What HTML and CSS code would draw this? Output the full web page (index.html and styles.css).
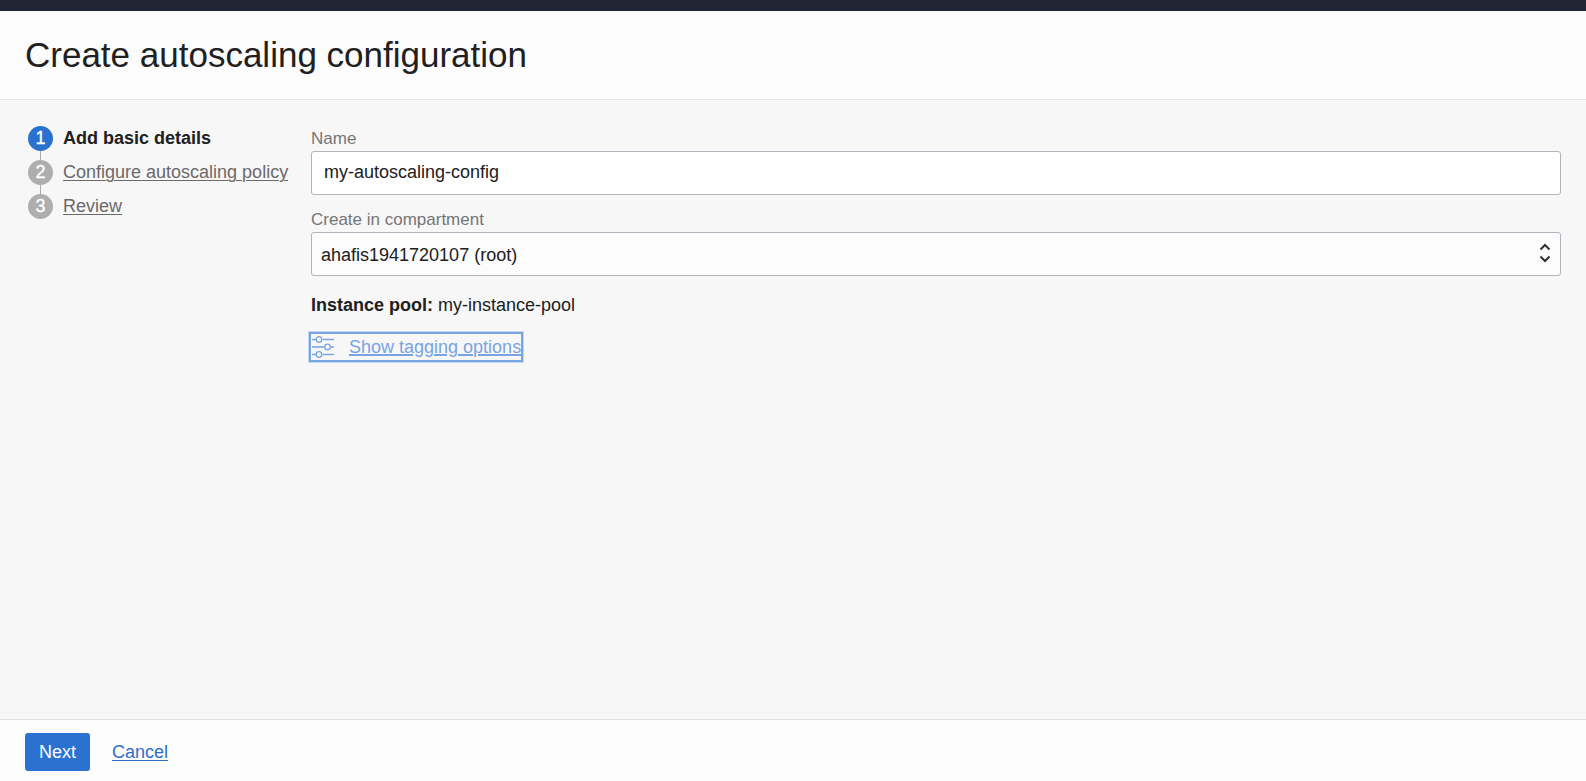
FILE: index.html
```html
<!DOCTYPE html>
<html lang="en">
<head>
<meta charset="utf-8">
<meta name="viewport" content="width=device-width, initial-scale=1">
<title>Create autoscaling configuration</title>
<link rel="stylesheet" href="styles.css">
</head>
<body>
<header class="page-header">
  <h1 class="page-title">Create autoscaling configuration</h1>
</header>
<main class="wizard">
  <nav aria-label="Steps">
    <ol class="steps">
      <li class="step step-current" aria-current="step"><span class="step-number">1</span><span>Add basic details</span></li>
      <li class="step"><span class="step-number">2</span><a class="step-link" href="#policy">Configure autoscaling policy</a></li>
      <li class="step"><span class="step-number">3</span><a class="step-link" href="#review">Review</a></li>
    </ol>
  </nav>
  <form class="details" id="details">
    <div class="field">
      <label class="field-label" for="name">Name</label>
      <input class="control name-input" id="name" type="text" value="my-autoscaling-config">
    </div>
    <div class="field">
      <label class="field-label" for="compartment">Create in compartment</label>
      <div class="select-wrap">
        <select class="control compartment-select" id="compartment">
          <option>ahafis1941720107 (root)</option>
        </select>
        <svg class="select-arrows" width="12" height="20" viewBox="0 0 12 20" aria-hidden="true"><path d="M1.500 6.500 6 2l4.500 4.500M1.500 13.500 6 18l4.500-4.500"/></svg>
      </div>
    </div>
    <p class="pool"><strong>Instance pool:</strong> my-instance-pool</p>
    <a class="tagging" href="#tagging">
      <svg class="tagging-icon" width="22" height="24" viewBox="0 0 22 24" aria-hidden="true"><path d="M0 4.500h4M11 4.500h11M0 12h12M19 12h3M0 19.500h4M11 19.500h11"/><circle cx="7" cy="4.500" r="2.800"/><circle cx="15.500" cy="12" r="2.800"/><circle cx="7" cy="19.500" r="2.800"/></svg>
      <span class="tagging-text">Show tagging options</span>
    </a>
  </form>
</main>
<footer class="actions">
  <button class="next" type="submit" form="details">Next</button>
  <a class="cancel" href="#cancel">Cancel</a>
</footer>
</body>
</html>
```
FILE: styles.css
```css
* {
  box-sizing: border-box;
}

body {
  margin: 0;
  min-height: 100vh;
  display: flex;
  flex-direction: column;
  border-top: 11px solid #212634;
  background: #f7f7f7;
  color: #202020;
  font: 18px/24px "Liberation Sans", Arial, sans-serif;
}

.page-header {
  padding: 24px 25px;
  border-bottom: 1px solid #e3e3e3;
  background: #fcfcfc;
}

.page-title {
  margin: 0;
  font-size: 35px;
  line-height: 40px;
  font-weight: 400;
}

.wizard {
  flex: 1;
  display: grid;
  grid-template-columns: 263px 1fr;
  gap: 20px;
  padding: 26px 25px 24px 28px;
}

.steps {
  display: flex;
  flex-direction: column;
  gap: 9px;
  margin: 0;
  padding: 0;
  list-style: none;
}

.step {
  position: relative;
  display: flex;
  gap: 10px;
  white-space: nowrap;
}

.step-current {
  font-weight: 700;
}

.step:not(:last-child)::after {
  content: "";
  position: absolute;
  top: 25px;
  left: 12px;
  width: 1px;
  height: 9px;
  background: #aaa;
}

.step-number {
  flex: none;
  width: 25px;
  height: 25px;
  border-radius: 50%;
  background: #aeaeae;
  color: #fff;
  font-weight: 400;
  line-height: 25px;
  text-align: center;
  -webkit-text-stroke: 0.3px #fff;
}

.step-current .step-number {
  background: #2b72d0;
}

.step-link {
  color: #6b6969;
}

.step-link,
.cancel,
.tagging-text {
  text-decoration-line: underline;
  text-decoration-thickness: 1px;
  text-underline-offset: 2px;
}

.field {
  margin-bottom: 12px;
}

.field-label {
  display: block;
  color: #757575;
  font-size: 17px;
  line-height: 25px;
}

.control {
  display: block;
  width: 100%;
  height: 44px;
  border: 1px solid #b0b4be;
  border-radius: 3px;
  color: #202020;
  font: inherit;
}

.name-input {
  padding: 0 12px 2px;
  background: #fff;
}

.select-wrap {
  position: relative;
}

.compartment-select {
  appearance: none;
  padding: 1px 32px 0 9px;
  background: #fcfcfc;
}

.select-arrows {
  position: absolute;
  top: 11px;
  right: 10px;
  fill: none;
  stroke: #303030;
  stroke-width: 2;
  pointer-events: none;
}

.pool {
  margin: 17px 0;
}

.tagging {
  display: inline-flex;
  align-items: center;
  gap: 15px;
  padding: 1px 0 1px 1px;
  outline: 2px solid #78a4e2;
  box-shadow: 0 0 0 3px #c2d7f2;
  color: #78a4e2;
  background: #f7f7f7;
}

.tagging-icon {
  fill: none;
  stroke: #78a4e2;
  stroke-width: 1.3;
}

.actions {
  display: flex;
  align-items: center;
  gap: 22px;
  padding: 13px 25px 10px;
  border-top: 1px solid #e1e1e1;
  background: #fcfcfc;
}

.next {
  height: 38px;
  padding: 0 14px;
  border: 0;
  border-radius: 3px;
  background: #2b72d0;
  color: #fff;
  font: inherit;
}

.cancel {
  color: #2d6fcb;
}
```
